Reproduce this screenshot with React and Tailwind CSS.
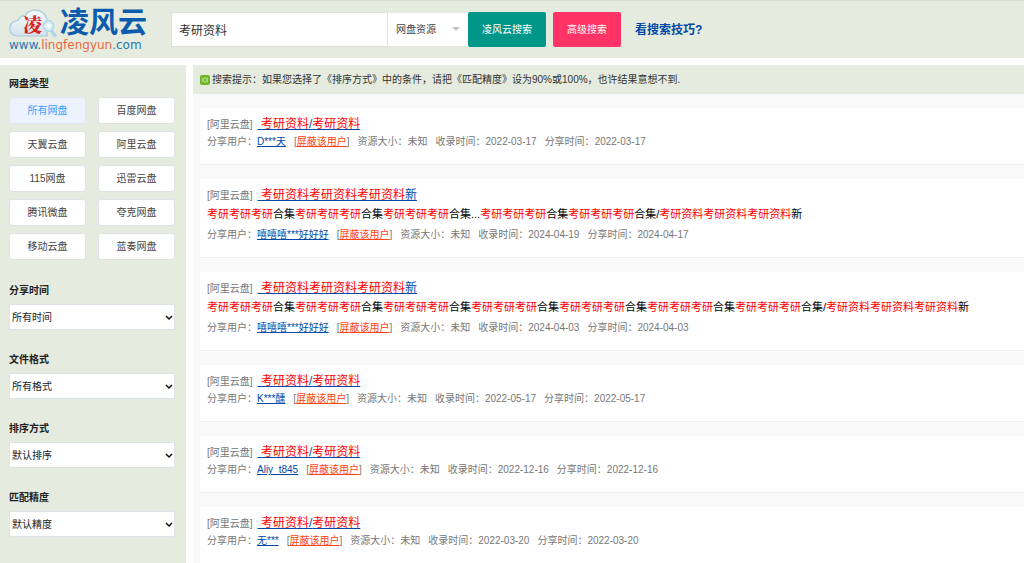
import { useState } from "react";

const diskTypes = [
  "所有网盘",
  "百度网盘",
  "天翼云盘",
  "阿里云盘",
  "115网盘",
  "迅雷云盘",
  "腾讯微盘",
  "夸克网盘",
  "移动云盘",
  "蓝奏网盘",
];

const filters = [
  { id: "time", label: "分享时间", options: ["所有时间", "最近一周", "最近一月"] },
  { id: "format", label: "文件格式", options: ["所有格式", "视频", "文档"] },
  { id: "sort", label: "排序方式", options: ["默认排序", "时间排序"] },
  { id: "accuracy", label: "匹配精度", options: ["默认精度", "90%", "100%"] },
];

const results = [
  {
    title: "考研资料/考研资料",
    user: "D***天",
    recorded: "2022-03-17",
    shared: "2022-03-17",
  },
  {
    title: "考研资料考研资料考研资料新",
    detail:
      "考研考研考研合集考研考研考研合集考研考研考研合集...考研考研考研合集考研考研考研合集/考研资料考研资料考研资料新",
    user: "嘻嘻嘻***好好好",
    recorded: "2024-04-19",
    shared: "2024-04-17",
  },
  {
    title: "考研资料考研资料考研资料新",
    detail:
      "考研考研考研合集考研考研考研合集考研考研考研合集考研考研考研合集考研考研考研合集考研考研考研合集考研考研考研合集/考研资料考研资料考研资料新",
    user: "嘻嘻嘻***好好好",
    recorded: "2024-04-03",
    shared: "2024-04-03",
  },
  {
    title: "考研资料/考研资料",
    user: "K***醺",
    recorded: "2022-05-17",
    shared: "2022-05-17",
  },
  {
    title: "考研资料/考研资料",
    user: "Aliy_t845",
    recorded: "2022-12-16",
    shared: "2022-12-16",
  },
  {
    title: "考研资料/考研资料",
    user: "无***",
    recorded: "2022-03-20",
    shared: "2022-03-20",
  },
];

// wraps every matched keyword in red
const Highlight = ({ text }) =>
  text.split(/((?:考研|资料)+)/).map((part, index) =>
    index % 2 ? (
      <span key={index} className="text-[#ff0000]">
        {part}
      </span>
    ) : (
      part
    )
  );

const Logo = () => (
  <a href="#" className="flex flex-col w-[138px] shrink-0">
    <span className="flex items-center justify-between h-[30px]">
      <svg viewBox="0 0 48 30" className="w-12 h-[30px]" aria-hidden="true">
        <defs>
          <linearGradient id="cloud" x1="0" y1="0" x2="0" y2="1">
            <stop offset="0" stopColor="#f7fbfc" />
            <stop offset="1" stopColor="#d3e4ec" />
          </linearGradient>
        </defs>
        <path
          d="M9 28C3.500 28 0.800 24.500 0.800 20.500C0.800 15.500 4.500 12.300 9.300 12.500C10 9 13 7.300 16 8.200C18 4 22.500 1.900 27 2.200C33.500 2.700 37.500 7 38 12.500L38 28Z"
          fill="url(#cloud)"
          stroke="#a9c9dc"
          strokeWidth="1.200"
        />
        <path d="M42.500 23L46 27.500" stroke="#b3d3e4" strokeWidth="3.500" strokeLinecap="round" />
        <circle cx="39.500" cy="18" r="5.200" fill="#d9edf6" stroke="#b4d6e7" strokeWidth="1.500" />
        <circle cx="39.500" cy="18" r="2.200" fill="#f6fbfd" />
        <text
          x="14"
          y="24"
          fontSize="19"
          fontWeight="900"
          fill="#dd1f1c"
          className="font-['Noto_Serif_CJK_SC','Noto_Sans_CJK_SC',serif]"
        >
          凌
        </text>
      </svg>
      <span className="text-[29px] leading-[30px] font-bold text-[#0c5cad]">凌风云</span>
    </span>
    <span className="font-['DejaVu_Sans',sans-serif] text-[12px] leading-[14px] text-[#2878b8]">
      www.<span className="text-[#e8683f]">lingfengyun</span>.com
    </span>
  </a>
);

const Header = () => {
  const [keyword, setKeyword] = useState("考研资料");

  return (
    <header className="flex items-center h-[58px] pl-[9px] bg-[#e5ebde] border-t border-[#d6dccf]">
      <Logo />
      <form className="flex items-center ml-6" onSubmit={(e) => e.preventDefault()}>
        <input
          type="text"
          aria-label="搜索关键词"
          value={keyword}
          onChange={(e) => setKeyword(e.target.value)}
          className="w-[217px] h-[35px] px-[7px] text-[12px] text-[#333] bg-white border border-[#e0e0e0] outline-none"
        />
        <div className="relative">
          <select
            aria-label="搜索范围"
            className="block w-20 h-[35px] px-2 text-[10px] text-[#444] bg-white appearance-none border-y border-[#e6e6e6] outline-none"
          >
            <option>网盘资源</option>
            <option>网盘用户</option>
          </select>
          <span className="absolute right-2 top-[15px] border-x-4 border-t-4 border-x-transparent border-t-[#c2c2c2] pointer-events-none" />
        </div>
        <button
          type="submit"
          className="w-[78px] h-[35px] rounded-xs bg-[#009688] text-[10px] text-white"
        >
          凌风云搜索
        </button>
        <button
          type="button"
          className="w-[68px] h-[35px] ml-[7px] rounded-xs bg-[#ff3366] text-[10px] text-white"
        >
          高级搜索
        </button>
      </form>
      <a href="#" className="ml-[14px] text-[12px] font-bold text-[#0048a8]">
        看搜索技巧?
      </a>
    </header>
  );
};

const Sidebar = () => {
  const [active, setActive] = useState("所有网盘");

  return (
    <aside className="w-[186px] shrink-0 pl-[9px] pr-[11px] pt-[9px] bg-[#e5ebde]">
      <h2 className="text-[10px] leading-5 font-bold text-[#222]">网盘类型</h2>
      <div className="grid grid-cols-2 gap-x-3 gap-y-[7px] mt-[3px] mb-[21px]">
        {diskTypes.map((type) => (
          <button
            key={type}
            type="button"
            onClick={() => setActive(type)}
            className={`h-[27px] rounded-[3px] border text-[10px] ${
              type === active
                ? "bg-[#ecf3ff] border-[#dce6f5] text-[#409eff]"
                : "bg-white border-[#dfe3e6] text-[#444]"
            }`}
          >
            {type}
          </button>
        ))}
      </div>
      {filters.map(({ id, label, options }) => (
        <div key={id} className="flex flex-col gap-[3px] mb-5">
          <label htmlFor={id} className="text-[10px] leading-5 font-bold text-[#222]">
            {label}
          </label>
          <div className="relative">
            <select
              id={id}
              className="block w-full h-[26px] px-[2px] text-[10px] text-[#222] bg-white appearance-none border border-[#dde3e8]"
            >
              {options.map((option) => (
                <option key={option}>{option}</option>
              ))}
            </select>
            <svg
              viewBox="0 0 8 6"
              className="absolute right-[2px] top-[11px] w-2 h-[6px] pointer-events-none"
              fill="none"
              stroke="#111"
              strokeWidth="1.500"
              aria-hidden="true"
            >
              <path d="M1 1L4 4L7 1" />
            </svg>
          </div>
        </div>
      ))}
    </aside>
  );
};

const ResultCard = ({ result }) => (
  <article className="px-[7px] pt-2 pb-3 bg-white border-b border-[#f0f0f0]">
    <div className="flex items-center gap-[5px] h-4">
      <span className="text-[10px] text-[#777]">[阿里云盘]</span>
      <h3 className="text-[12px] leading-4">
        <a href="#" className="text-[#0048a8] underline">
          {"\u00a0"}
          <Highlight text={result.title} />
        </a>
      </h3>
    </div>
    {result.detail && (
      <p className="text-[11px] leading-[22px] text-black">
        <Highlight text={result.detail} />
      </p>
    )}
    <div className="flex flex-wrap gap-x-2 text-[10px] leading-5 text-[#777]">
      <span>
        分享用户：
        <a href="#" className="text-[#0048a8] underline">
          {result.user}
        </a>
      </span>
      <span>
        [
        <a href="#" className="text-[#ff4411] underline">
          屏蔽该用户
        </a>
        ]
      </span>
      <span>资源大小：未知</span>
      <span>收录时间：{result.recorded}</span>
      <span>分享时间：{result.shared}</span>
    </div>
  </article>
);

const App = () => {
  return (
    <div className="flex flex-col min-h-screen bg-white font-['Liberation_Sans','Noto_Sans_CJK_SC',sans-serif]">
      <Header />
      <div className="flex flex-1 gap-[7px] pt-[7px]">
        <Sidebar />
        <main className="flex-1 min-w-0 bg-[#f9f9f9]">
          <div className="flex items-center gap-[2px] h-[29px] pl-[7px] bg-[#e5ebde] text-[10px] text-[#333]">
            <svg viewBox="0 0 10 10" className="w-[10px] h-[10px]" aria-hidden="true">
              <rect width="10" height="10" rx="2" fill="#6fb52c" />
              <path
                d="M2 3L4 4.500M2 7L4 5.500M1.800 5H3.500M5 2V4M5 6V8M8 3L6 4.500M8 7L6 5.500M6.500 5H8.200"
                stroke="#e4f5cf"
                strokeWidth="0.800"
              />
            </svg>
            <p>
              搜索提示：如果您选择了《排序方式》中的条件，请把《匹配精度》设为90%或100%，也许结果意想不到.
            </p>
          </div>
          <div className="flex flex-col gap-[14px] pl-[7px] pt-[14px]">
            {results.map((result, index) => (
              <ResultCard key={index} result={result} />
            ))}
          </div>
        </main>
      </div>
    </div>
  );
};

export default App;
